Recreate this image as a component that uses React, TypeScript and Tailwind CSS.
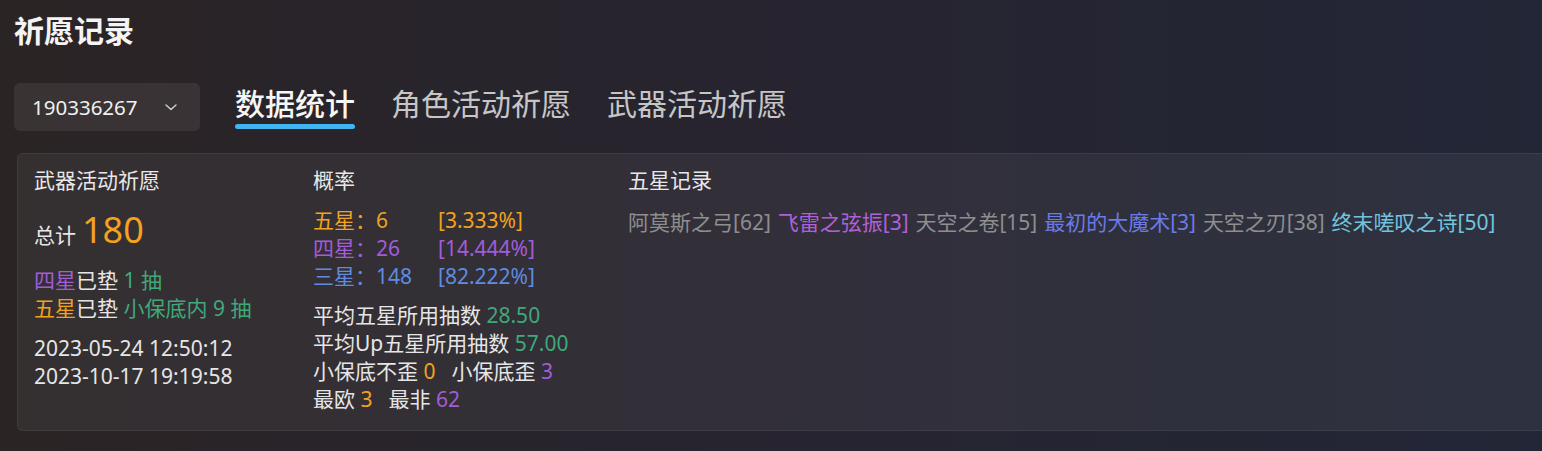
import React from "react";

const FONT = { fontFamily: '"Noto Sans", "Noto Sans CJK SC", sans-serif' };

const ORANGE = "text-[#f2a21e]";
const PURPLE = "text-[#a35cd8]";
const BLUE = "text-[#5f8ce0]";
const GREEN = "text-[#3fa97a]";

function Chevron() {
  return (
    <svg width="12" height="7" viewBox="0 0 12 7" fill="none">
      <path d="M1 1l5 4.6L11 1" stroke="#d0d0d0" strokeWidth="1.4" strokeLinecap="round" strokeLinejoin="round" />
    </svg>
  );
}

export default function App() {
  return (
    <div
      style={FONT}
      className="h-[451px] w-full overflow-hidden bg-linear-to-r from-[#2b2425] via-[#272430] to-[#222636] text-[#e6e6e6]"
    >
      <div className="pl-[14px] pt-[11px]">
        <h1 className="h-[40px] text-[30px] font-bold leading-[40px] text-[#f4f4f4]">祈愿记录</h1>
        <div className="mt-[32px] flex items-start">
          <div className="flex h-[48px] w-[186px] items-center justify-between rounded-[6px] bg-white/[0.07] pl-[18px] pr-[23px]">
            <span className="text-[20.5px] text-[#f0f0f0]">190336267</span>
            <Chevron />
          </div>
          <div className="ml-[35px] mt-[1px] flex gap-[36px] text-[30px] leading-[40px]">
            <div className="flex flex-col">
              <span className="font-medium text-[#f6f6f6]">数据统计</span>
              <span className="h-[5px] rounded-full bg-[#41b4f2]" />
            </div>
            <span className="text-[#c6c6c6]">角色活动祈愿</span>
            <span className="text-[#c6c6c6]">武器活动祈愿</span>
          </div>
        </div>
      </div>

      <div className="mt-[22px] pl-[17px]">
        <div className="flex h-[278px] rounded-l-[6px] border border-r-0 border-white/[0.06] bg-white/[0.05] pl-[16px] pt-[12px] text-[21px] leading-[28px]">
          {/* column 1 */}
          <div className="w-[279px] shrink-0">
            <div className="text-[#e8e8e8]">武器活动祈愿</div>
            <div className="mt-[14px] flex h-[44px] items-baseline leading-[44px]">
              <span>总计</span>
              <span className={`ml-[6px] text-[36px] ${ORANGE}`}>180</span>
            </div>
            <div className="mt-[14px]">
              <span className={PURPLE}>四星</span>
              <span>已垫</span>
              <span className={GREEN}> 1 抽</span>
            </div>
            <div>
              <span className={ORANGE}>五星</span>
              <span>已垫</span>
              <span className={GREEN}> 小保底内 9 抽</span>
            </div>
            <div className="mt-[12px]">2023-05-24 12:50:12</div>
            <div>2023-10-17 19:19:58</div>
          </div>

          {/* column 2 */}
          <div className="w-[315px] shrink-0">
            <div className="text-[#e8e8e8]">概率</div>
            <div className="mt-[12px]">
              <div className={`flex ${ORANGE}`}>
                <span className="w-[63px]">五星：</span>
                <span className="w-[62px]">6</span>
                <span>[3.333%]</span>
              </div>
              <div className={`flex ${PURPLE}`}>
                <span className="w-[63px]">四星：</span>
                <span className="w-[62px]">26</span>
                <span>[14.444%]</span>
              </div>
              <div className={`flex ${BLUE}`}>
                <span className="w-[63px]">三星：</span>
                <span className="w-[62px]">148</span>
                <span>[82.222%]</span>
              </div>
            </div>
            <div className="mt-[11px]">
              <div>
                平均五星所用抽数 <span className={GREEN}>28.50</span>
              </div>
              <div>
                平均Up五星所用抽数 <span className={GREEN}>57.00</span>
              </div>
              <div>
                <span className="mr-[16px]">
                  小保底不歪 <span className={ORANGE}>0</span>
                </span>
                <span>
                  小保底歪 <span className={PURPLE}>3</span>
                </span>
              </div>
              <div>
                <span className="mr-[16px]">
                  最欧 <span className={ORANGE}>3</span>
                </span>
                <span>
                  最非 <span className={PURPLE}>62</span>
                </span>
              </div>
            </div>
          </div>

          {/* column 3 */}
          <div className="flex-1">
            <div className="text-[#e8e8e8]">五星记录</div>
            <div className="mt-[14px] whitespace-nowrap [word-spacing:1.4px]">
              <span className="text-[#8e8e8e]">阿莫斯之弓[62]</span>{" "}
              <span className="text-[#b15fd6]">飞雷之弦振[3]</span>{" "}
              <span className="text-[#8e8e8e]">天空之卷[15]</span>{" "}
              <span className="text-[#6b7ae6]">最初的大魔术[3]</span>{" "}
              <span className="text-[#8e8e8e]">天空之刃[38]</span>{" "}
              <span className="text-[#72c4dd]">终末嗟叹之诗[50]</span>
            </div>
          </div>
        </div>
      </div>
    </div>
  );
}
